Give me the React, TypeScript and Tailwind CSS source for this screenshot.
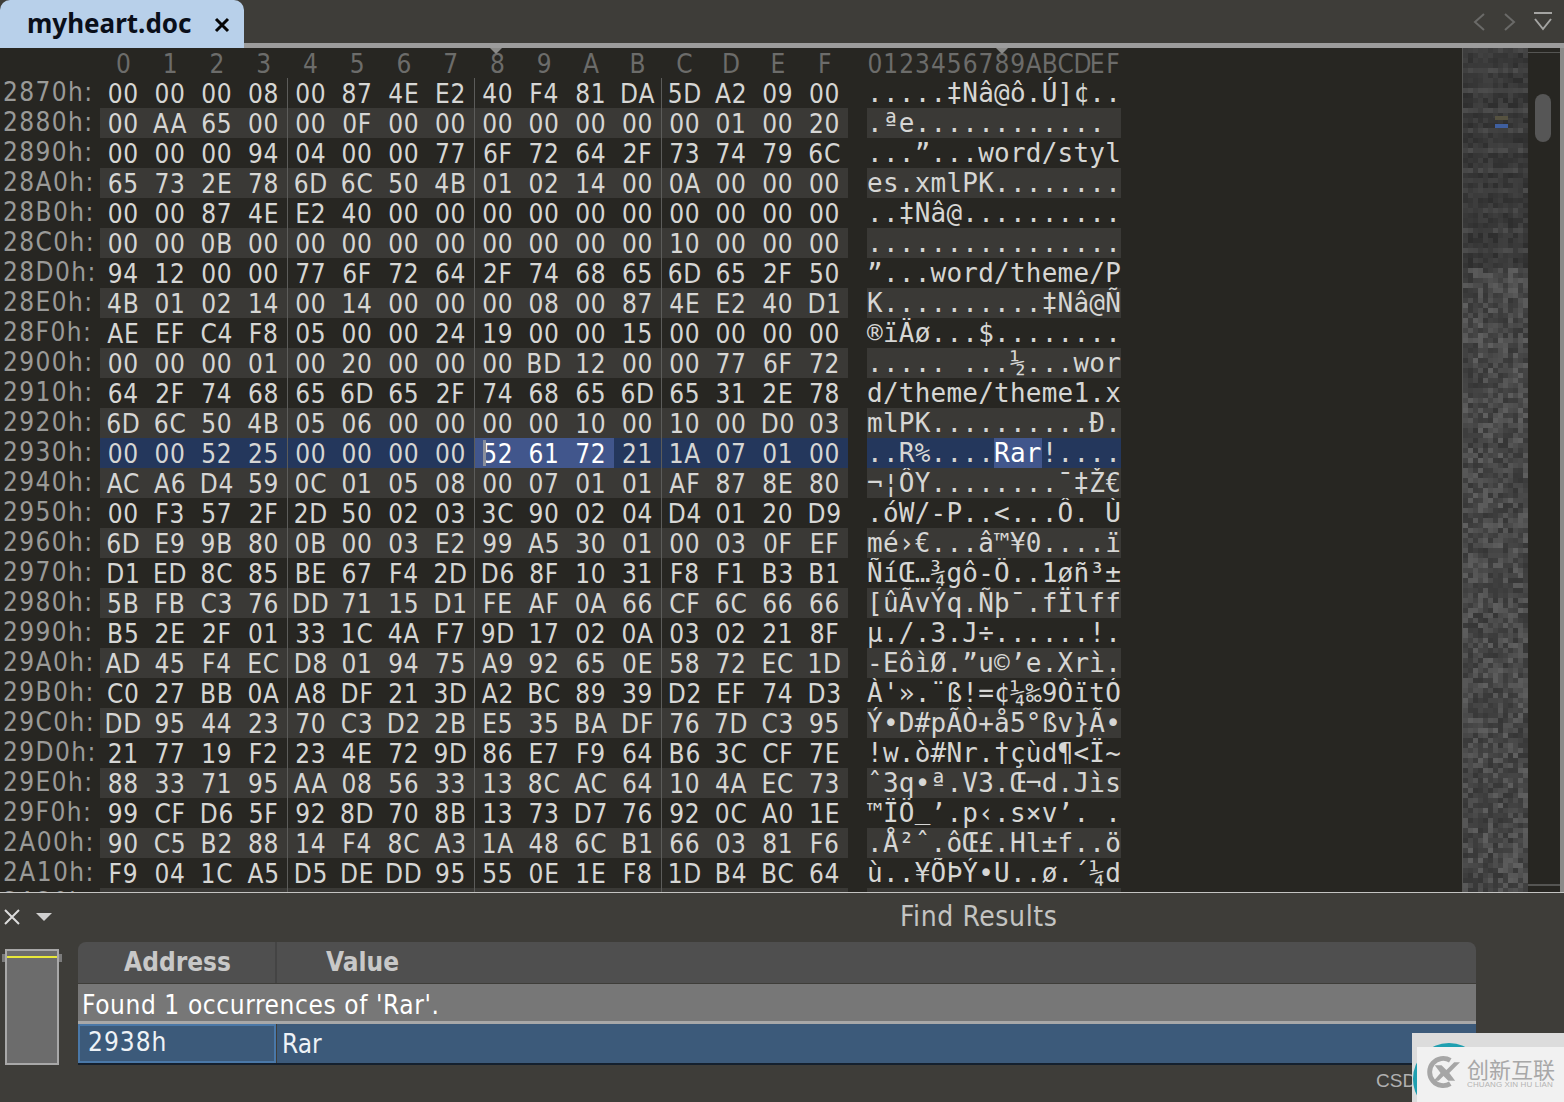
import { useMemo } from "react";

const rows: [string, string, string][] = [
  ["2870h:", "00 00 00 08 00 87 4E E2 40 F4 81 DA 5D A2 09 00", ".....‡Nâ@ô.Ú]¢.."],
  ["2880h:", "00 AA 65 00 00 0F 00 00 00 00 00 00 00 01 00 20", ".ªe............ "],
  ["2890h:", "00 00 00 94 04 00 00 77 6F 72 64 2F 73 74 79 6C", "...”...word/styl"],
  ["28A0h:", "65 73 2E 78 6D 6C 50 4B 01 02 14 00 0A 00 00 00", "es.xmlPK........"],
  ["28B0h:", "00 00 87 4E E2 40 00 00 00 00 00 00 00 00 00 00", "..‡Nâ@.........."],
  ["28C0h:", "00 00 0B 00 00 00 00 00 00 00 00 00 10 00 00 00", "................"],
  ["28D0h:", "94 12 00 00 77 6F 72 64 2F 74 68 65 6D 65 2F 50", "”...word/theme/P"],
  ["28E0h:", "4B 01 02 14 00 14 00 00 00 08 00 87 4E E2 40 D1", "K..........‡Nâ@Ñ"],
  ["28F0h:", "AE EF C4 F8 05 00 00 24 19 00 00 15 00 00 00 00", "®ïÄø...$........"],
  ["2900h:", "00 00 00 01 00 20 00 00 00 BD 12 00 00 77 6F 72", "..... ...½...wor"],
  ["2910h:", "64 2F 74 68 65 6D 65 2F 74 68 65 6D 65 31 2E 78", "d/theme/theme1.x"],
  ["2920h:", "6D 6C 50 4B 05 06 00 00 00 00 10 00 10 00 D0 03", "mlPK..........Ð."],
  ["2930h:", "00 00 52 25 00 00 00 00 52 61 72 21 1A 07 01 00", "..R%....Rar!...."],
  ["2940h:", "AC A6 D4 59 0C 01 05 08 00 07 01 01 AF 87 8E 80", "¬¦ÔY........¯‡Ž€"],
  ["2950h:", "00 F3 57 2F 2D 50 02 03 3C 90 02 04 D4 01 20 D9", ".óW/-P..<...Ô. Ù"],
  ["2960h:", "6D E9 9B 80 0B 00 03 E2 99 A5 30 01 00 03 0F EF", "mé›€...â™¥0....ï"],
  ["2970h:", "D1 ED 8C 85 BE 67 F4 2D D6 8F 10 31 F8 F1 B3 B1", "ÑíŒ…¾gô-Ö..1øñ³±"],
  ["2980h:", "5B FB C3 76 DD 71 15 D1 FE AF 0A 66 CF 6C 66 66", "[ûÃvÝq.Ñþ¯.fÏlff"],
  ["2990h:", "B5 2E 2F 01 33 1C 4A F7 9D 17 02 0A 03 02 21 8F", "µ./.3.J÷......!."],
  ["29A0h:", "AD 45 F4 EC D8 01 94 75 A9 92 65 0E 58 72 EC 1D", "-EôìØ.”u©’e.Xrì."],
  ["29B0h:", "C0 27 BB 0A A8 DF 21 3D A2 BC 89 39 D2 EF 74 D3", "À'».¨ß!=¢¼‰9ÒïtÓ"],
  ["29C0h:", "DD 95 44 23 70 C3 D2 2B E5 35 BA DF 76 7D C3 95", "Ý•D#pÃÒ+å5°ßv}Ã•"],
  ["29D0h:", "21 77 19 F2 23 4E 72 9D 86 E7 F9 64 B6 3C CF 7E", "!w.ò#Nr.†çùd¶<Ï~"],
  ["29E0h:", "88 33 71 95 AA 08 56 33 13 8C AC 64 10 4A EC 73", "ˆ3q•ª.V3.Œ¬d.Jìs"],
  ["29F0h:", "99 CF D6 5F 92 8D 70 8B 13 73 D7 76 92 0C A0 1E", "™ÏÖ_’.p‹.s×v’. ."],
  ["2A00h:", "90 C5 B2 88 14 F4 8C A3 1A 48 6C B1 66 03 81 F6", ".Å²ˆ.ôŒ£.Hl±f..ö"],
  ["2A10h:", "F9 04 1C A5 D5 DE DD 95 55 0E 1E F8 1D B4 BC 64", "ù..¥ÕÞÝ•U..ø.´¼d"],
  ["2A20h:", "", ""],
];

const SEL_ROW = 12;
const cols = "0123456789ABCDEF".split("");

function Minimap() {
  const cells = useMemo(() => {
    const out: { x: number; y: number; v: number }[] = [];
    let seed = 7;
    for (let y = 0; y < 169; y++) {
      for (let x = 0; x < 13; x++) {
        seed = (seed * 1103515245 + 12345) & 0x7fffffff;
        const r = (seed >> 16) % 100;
        // the first rows of the file are mostly empty, the rest is noise
        const v = y < 44 ? 46 + (r % 20) + (y % 4 === 0 ? 12 : 0) : 54 + (r % 42);
        out.push({ x, y, v });
      }
    }
    return out;
  }, []);
  return (
    <svg width="65" height="844" className="block">
      {cells.map((c, i) => (
        <rect key={i} x={c.x * 5} y={c.y * 5} width="5" height="5" fill={`rgb(${c.v},${c.v},${c.v})`} />
      ))}
      <rect x="32" y="68" width="13" height="4" fill="#565240" />
      <rect x="32" y="76" width="13" height="4" fill="#3f5f9f" />
    </svg>
  );
}

function HexRow({ index }: { index: number }) {
  const [addr, hex, ascii] = rows[index];
  const bytes = hex ? hex.split(" ") : Array.from({ length: 16 }, () => "");
  const striped = index % 2 === 1;
  const sel = index === SEL_ROW;
  const rowBg = sel ? "bg-[#24375c]" : striped ? "bg-[#3a3936]" : "";
  return (
    <div className="relative flex h-[30px] shrink-0" style={{ zIndex: 100 - index }}>
      <div className="h-[30px] w-[100px] shrink-0 pl-[3px] font-['DejaVu_Sans'] text-[26px] leading-[28px] tracking-[1.4px] [font-stretch:condensed] text-[#9a9a98]">{addr}</div>
      <div className={`grid h-[30px] w-[748px] shrink-0 grid-cols-[repeat(16,46.75px)] ${rowBg}`}>
        {bytes.map((b, i) => (
          <div
            key={i}
            className={`relative h-[30px] text-center font-['DejaVu_Sans'] text-[26px] leading-[32px] tracking-[0.8px] [font-stretch:condensed] text-[#d6d6d4] ${
              i % 4 === 0 && i > 0 ? "border-l border-[#5c5c5a]" : ""
            } ${sel && i >= 8 && i <= 10 ? "bg-[#41568c] text-white" : ""}`}
          >
            {sel && i === 8 && <span className="absolute left-[8px] top-[2px] h-[26px] w-[3px] bg-[#8a8f9c]" />}
            {b}
          </div>
        ))}
      </div>
      <div className="w-[19px] shrink-0" />
      <div className={`grid h-[30px] w-[254px] shrink-0 grid-cols-[repeat(16,15.875px)] ${rowBg}`}>
        {ascii.split("").map((ch, i) => (
          <span
            key={i}
            className={`h-[30px] text-center font-['DejaVu_Sans_Mono'] text-[26px] text-[#d6d6d4] ${
              ch === "_" ? "leading-[25px]" : "leading-[30px]"
            } ${sel && i >= 8 && i <= 10 ? "bg-[#41568c] text-white" : ""}`}
          >
            {ch}
          </span>
        ))}
      </div>
    </div>
  );
}

function Watermark() {
  return (
    <div className="absolute bottom-0 right-0 h-[69px] w-[152px] bg-[#dcdcdc] pl-[5px] pt-[14px]">
      <div className="absolute left-[1px] top-[10px] h-[72px] w-[72px] rounded-full border-[5px] border-[#1f9fb0]" />
      <div className="relative flex h-[55px] items-start gap-[7px] bg-[#f1f1f1] pl-[8px] pt-[8px]">
        <svg width="35" height="34" viewBox="0 0 36 34" className="shrink-0">
          <path d="M26 5 A14 14 0 1 0 26 29" fill="none" stroke="#a6a6a6" strokeWidth="5" />
          <path d="M10 10 L17 10 L22 15 L30 7 L36 7 L25 18 L31 26 L24 26 L19 21 L14 26 L9 26 L16 18 Z" fill="#a6a6a6" />
        </svg>
        <div className="flex flex-col">
          <span className="font-['Noto_Sans_CJK_SC',sans-serif] text-[22px] leading-[26px] text-[#a8a8a8]">创新互联</span>
          <span className="whitespace-nowrap font-['Liberation_Sans',sans-serif] text-[8px] leading-[8px] tracking-[0.1px] text-[#b4b4b4]">CHUANG XIN HU LIAN</span>
        </div>
      </div>
    </div>
  );
}

export default function App() {
  return (
    <div className="relative flex h-[1102px] w-[1564px] flex-col overflow-hidden bg-[#3e3d39] font-['DejaVu_Sans',sans-serif]">
      {/* tab bar */}
      <div className="flex h-[48px] shrink-0 items-stretch">
        <div className="flex w-[244px] shrink-0 items-center rounded-t-[10px] bg-[#b8d0ea] pb-[3px] pl-[27px]">
          <span className="font-['Noto_Sans'] text-[26px] font-bold leading-none text-[#0a0f1a]">myheart.doc</span>
          <svg width="16" height="16" viewBox="0 0 16 16" className="ml-[22px] mt-[5px] shrink-0">
            <path d="M2 2 L14 14 M14 2 L2 14" stroke="#050505" strokeWidth="3" />
          </svg>
        </div>
        <div className="flex flex-1 flex-col">
          <div className="flex h-[43px] items-center justify-end gap-[15px] pr-[11px]">
            <svg width="16" height="20" viewBox="0 0 16 20"><path d="M13 2 L4 10 L13 18" fill="none" stroke="#6a6a68" strokeWidth="2" /></svg>
            <svg width="16" height="20" viewBox="0 0 16 20"><path d="M3 2 L12 10 L3 18" fill="none" stroke="#6a6a68" strokeWidth="2" /></svg>
            <svg width="20" height="22" viewBox="0 0 20 22"><path d="M1 2 H19 M2 8 L10 18 L18 8" fill="none" stroke="#a4a4a2" strokeWidth="2" /></svg>
          </div>
          <div className="h-[5px] bg-[#9c9c9c]" />
        </div>
      </div>

      {/* editor */}
      <div className="relative flex h-[845px] shrink-0 overflow-hidden border-b border-[#c4c4c2] bg-[#272622]">
        <div className="flex w-[1462px] shrink-0 flex-col">
          <div className="flex h-[30px] shrink-0 leading-[32px]">
            <div className="w-[100px] shrink-0" />
            <div className="grid w-[748px] shrink-0 grid-cols-[repeat(16,46.75px)]">
              {cols.map((c) => (
                <div key={c} className="text-center font-['DejaVu_Sans'] text-[26px] [font-stretch:condensed] text-[#6c6c6a]">{c}</div>
              ))}
            </div>
            <div className="w-[19px] shrink-0" />
            <div className="grid w-[254px] shrink-0 grid-cols-[repeat(16,15.875px)]">
              {cols.map((c) => (
                <span key={c} className="text-center font-['DejaVu_Sans'] text-[26px] [font-stretch:condensed] text-[#6c6c6a]">{c}</span>
              ))}
            </div>
          </div>
          {rows.map((_, i) => (
            <HexRow key={i} index={i} />
          ))}
        </div>
        <div className="w-px shrink-0 bg-[#555553]" />
        <Minimap />
        <div className="relative flex-1 border-r-[4px] border-[#8a8a88]">
          <div className="absolute left-[7px] top-[46px] h-[48px] w-[16px] rounded-full bg-[#565656]" />
          <div className="absolute inset-x-0 top-[4px] h-px bg-[#555553]" />
          <div className="absolute inset-x-0 bottom-[6px] h-[2px] bg-[#555553]" />
        </div>
        <div className="absolute left-[490px] top-0 z-[200] h-0 w-0 border-x-[6px] border-t-[6px] border-x-transparent border-t-[#8a8a88]" />
        <div className="absolute left-[996px] top-0 z-[200] h-0 w-0 border-x-[6px] border-t-[6px] border-x-transparent border-t-[#8a8a88]" />
      </div>

      {/* find results */}
      <div className="flex min-h-0 flex-1 flex-col [font-stretch:condensed]">
        <div className="relative flex h-[48px] shrink-0 items-center pl-[3px]">
          <svg width="18" height="18" viewBox="0 0 18 18"><path d="M2 2 L16 16 M16 2 L2 16" stroke="#dcdcdc" strokeWidth="2" /></svg>
          <svg width="16" height="10" viewBox="0 0 16 10" className="ml-[15px]"><path d="M0 1 H16 L8 9 Z" fill="#d0d0d0" /></svg>
          <span className="absolute left-[900px] top-[10px] text-[28px] leading-none tracking-[0.6px] text-[#c4c4c2]">Find Results</span>
        </div>
        <div className="flex items-start pl-[5px] pt-px">
          <div className="relative mt-[7px] h-[116px] w-[54px] shrink-0 border-2 border-[#a8a8a8] bg-[#6c6c6c]">
            <div className="mt-[5px] h-[2px] bg-[#e8e83a]" />
            <div className="absolute -left-[5px] top-[3px] h-[8px] w-[3px] bg-[#7c7c7c]" />
            <div className="absolute -right-[5px] top-[3px] h-[8px] w-[3px] bg-[#7c7c7c]" />
          </div>
          <div className="ml-[19px] w-[1398px]">
            <div className="flex h-[41px] rounded-t-[8px] bg-[#4f4f4f] text-[26px] font-bold leading-[40px] text-[#c8c8c8]">
              <div className="w-[199px] border-r-2 border-[#444] pl-[2px] text-center">Address</div>
              <div className="pl-[49px]">Value</div>
            </div>
            <div className="mt-px flex h-[40px] items-center border-b-[3px] border-[#a8a8a8] bg-[#777] pl-[4px] pt-[5px] text-[26px] leading-none tracking-[0.6px] text-white">
              Found 1 occurrences of 'Rar'.
            </div>
            <div className="flex h-[41px] border-b-2 border-[#14202e] text-[26px] text-[#eef2f6]">
              <div className="w-[198px] border-2 border-[#4a78a8] bg-[#3c5a7a] pl-[8px] leading-[32px] tracking-[1px]">2938h</div>
              <div className="ml-px flex-1 bg-[#3c5a7a] pl-[5px] leading-[40px]">Rar</div>
            </div>
          </div>
        </div>
        <span className="absolute left-[1376px] top-[1071px] font-['Liberation_Sans',sans-serif] text-[19px] leading-none text-[#b0b0b0]">CSD</span>
      </div>
      <Watermark />
    </div>
  );
}
